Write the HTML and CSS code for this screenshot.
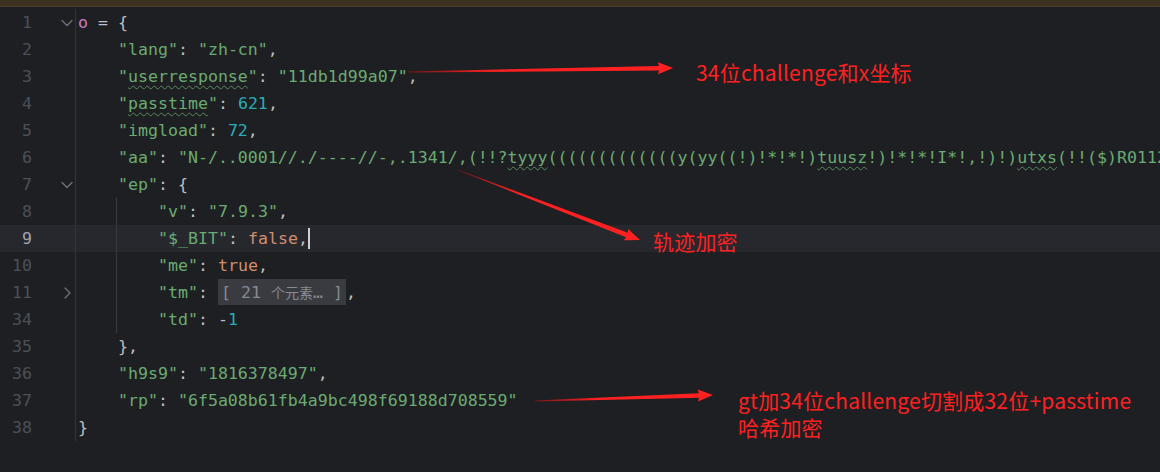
FILE: index.html
```html
<!DOCTYPE html>
<html lang="zh-CN">
<head>
    <meta charset="UTF-8">
    <title>editor</title>
    <link rel="stylesheet" href="styles.css">
</head>
<body>
    <div class="topbar"></div>
    <div class="editor">
        <div class="row"><span class="ln">1</span><span class="fold"><svg class="chev" width="12" height="8" viewBox="0 0 12 8"><polyline points="1,1.5 6,6.5 11,1.5"/></svg></span><span class="code"><span class="var">o</span> = {</span></div>
        <div class="row"><span class="ln">2</span><span class="fold"></span><span class="code">    <span class="str">"lang"</span>: <span class="str">"zh-cn"</span>,</span></div>
        <div class="row"><span class="ln">3</span><span class="fold"></span><span class="code">    <span class="str">"<span class="typo">userresponse</span>"</span>: <span class="str">"11db1d99a07"</span>,</span></div>
        <div class="row"><span class="ln">4</span><span class="fold"></span><span class="code">    <span class="str">"<span class="typo">passtime</span>"</span>: <span class="num">621</span>,</span></div>
        <div class="row"><span class="ln">5</span><span class="fold"></span><span class="code">    <span class="str">"imgload"</span>: <span class="num">72</span>,</span></div>
        <div class="row"><span class="ln">6</span><span class="fold"></span><span class="code">    <span class="str">"aa"</span>: <span class="str">"N-/..0001//./----//-,.1341/,(!!?<span class="typo">tyyy</span>(((((((((((((y(yy((!)!*!*!)<span class="typo">tuusz</span>!)!*!*!I*!,!)!)<span class="typo">utxs</span>(!!($)R0112(!!($)"</span>,</span></div>
        <div class="row"><span class="ln">7</span><span class="fold"><svg class="chev" width="12" height="8" viewBox="0 0 12 8"><polyline points="1,1.5 6,6.5 11,1.5"/></svg></span><span class="code">    <span class="str">"ep"</span>: {</span></div>
        <div class="row"><span class="ln">8</span><span class="fold"></span><span class="code"><span class="tab"></span><span class="tab guide"></span><span class="str">"v"</span>: <span class="str">"7.9.3"</span>,</span></div>
        <div class="row current"><span class="ln">9</span><span class="fold"></span><span class="code"><span class="tab"></span><span class="tab guide"></span><span class="str">"$_BIT"</span>: <span class="kw">false</span>,<span class="caret"></span></span></div>
        <div class="row"><span class="ln">10</span><span class="fold"></span><span class="code"><span class="tab"></span><span class="tab guide"></span><span class="str">"me"</span>: <span class="kw">true</span>,</span></div>
        <div class="row"><span class="ln">11</span><span class="fold"><svg class="chev" width="12" height="12" viewBox="0 0 12 12"><polyline points="4,1 9,6 4,11"/></svg></span><span class="code"><span class="tab"></span><span class="tab guide"></span><span class="str">"tm"</span>: <span class="folded">[ 21 <span class="cjk">个元素</span>… ]</span>,</span></div>
        <div class="row"><span class="ln">34</span><span class="fold"></span><span class="code"><span class="tab"></span><span class="tab guide"></span><span class="str">"td"</span>: -<span class="num">1</span></span></div>
        <div class="row"><span class="ln">35</span><span class="fold"></span><span class="code">    },</span></div>
        <div class="row"><span class="ln">36</span><span class="fold"></span><span class="code">    <span class="str">"h9s9"</span>: <span class="str">"1816378497"</span>,</span></div>
        <div class="row"><span class="ln">37</span><span class="fold"></span><span class="code">    <span class="str">"rp"</span>: <span class="str">"6f5a08b61fb4a9bc498f69188d708559"</span></span></div>
        <div class="row"><span class="ln">38</span><span class="fold"></span><span class="code">}</span></div>
        <div class="row rest"><span class="ln"></span><span class="fold"></span><span class="code"></span></div>
    </div>

    <svg class="arrows" width="1160" height="472" viewBox="0 0 1160 472">
        <defs>
            <linearGradient id="tail" x1="0" y1="0" x2="1" y2="0">
                <stop offset="0" stop-color="#7a1515"/>
                <stop offset="0.35" stop-color="#ff2121"/>
                <stop offset="1" stop-color="#ff2121"/>
            </linearGradient>
        </defs>
        <g transform="translate(408,72) rotate(-0.86)">
            <polygon fill="url(#tail)" points="0,-0.4 251,-2.3 250,-6 265,0 250,6 251,2.3 0,0.4"/>
        </g>
        <g transform="translate(458,170) rotate(21.04)">
            <polygon fill="url(#tail)" points="0,-0.4 181,-2.3 180,-6 195,0 180,6 181,2.3 0,0.4"/>
        </g>
        <g transform="translate(535,401) rotate(-1.93)">
            <polygon fill="url(#tail)" points="0,-0.4 164,-2.3 163,-6 178,0 163,6 164,2.3 0,0.4"/>
        </g>
    </svg>

    <div class="note note-challenge">34位challenge和x坐标</div>
    <div class="note note-track">轨迹加密</div>
    <div class="note note-hash">gt加34位challenge切割成32位+passtime<br>哈希加密</div>
</body>
</html>
```

FILE: styles.css
```css
html, body {
    margin: 0;
    padding: 0;
    width: 1160px;
    height: 472px;
    overflow: hidden;
}
body {
    position: relative;
    background: #1e1f22;
    font-family: "DejaVu Sans Mono", "Liberation Mono", "Noto Sans CJK SC", monospace;
    font-size: 16.6px;
    color: #bcbec4;
}
.topbar {
    height: 6px;
    background: #3d3222;
    border-bottom: 1px solid #4a3d2a;
}
.editor {
    padding-top: 2px;
    display: flex;
    flex-direction: column;
}
.row {
    display: flex;
    height: 27px;
    line-height: 27px;
    white-space: pre;
}
.row.current {
    background: #26282e;
}
.row.rest {
    flex: 1;
    height: 40px;
}
.ln {
    width: 32px;
    flex: none;
    text-align: right;
    color: #4b5059;
}
.current .ln {
    color: #a1a3ab;
}
.fold {
    width: 43px;
    flex: none;
    display: flex;
    align-items: center;
    padding-left: 29px;
    box-sizing: border-box;
}
.chev {
    display: block;
}
.chev polyline {
    fill: none;
    stroke: #6f737a;
    stroke-width: 1.3;
    stroke-linecap: round;
    stroke-linejoin: round;
}
.code {
    flex: 1;
    border-left: 1px solid #313438;
    padding-left: 2px;
    overflow: hidden;
}
.tab {
    display: inline-block;
    width: 40px;
    height: 27px;
    vertical-align: top;
    box-sizing: border-box;
}
.tab.guide {
    border-left: 1px solid #393b40;
    margin-left: -2px;
    width: 42px;
}
.var { color: #c77dbb; }
.str { color: #6aab73; }
.num { color: #2aacb8; }
.kw { color: #cf8e6d; }
.typo {
    text-decoration: underline wavy #5c8a60;
    text-decoration-thickness: 1px;
    text-underline-offset: 3px;
}
.caret {
    display: inline-block;
    width: 2px;
    height: 21px;
    background: #ced0d6;
    vertical-align: -5px;
}
.folded {
    display: inline-block;
    height: 26px;
    line-height: 26px;
    padding: 0 3px;
    vertical-align: top;
    background: #393b40;
    color: #868a91;
}
.cjk {
    font-family: "Noto Sans CJK SC", sans-serif;
    font-size: 14px;
}
.arrows {
    position: absolute;
    left: 0;
    top: 0;
    pointer-events: none;
}
.note {
    position: absolute;
    font-family: "Noto Sans CJK SC", sans-serif;
    font-size: 21px;
    letter-spacing: 0.2px;
    line-height: 27px;
    color: #ff2121;
    white-space: nowrap;
}
.note-challenge {
    left: 696px;
    top: 59px;
}
.note-track {
    left: 653px;
    top: 228px;
}
.note-hash {
    left: 738px;
    top: 387px;
}
```
